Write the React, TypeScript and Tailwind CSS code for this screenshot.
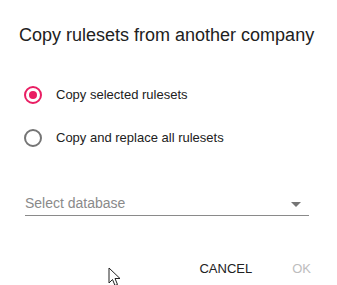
import React from "react";

function Radio({ checked }: { checked: boolean }) {
    return (
        <span
            className={`w-[18px] h-[18px] rounded-full border-2 flex items-center justify-center flex-shrink-0 ${
                checked ? "border-[#e91e63]" : "border-[#757575]"
            }`}
        >
            {checked && <span className="w-[8px] h-[8px] rounded-full bg-[#e91e63]" />}
        </span>
    );
}

export default function App() {
    return (
        <div
            className="relative w-[337px] h-[285px] bg-white overflow-hidden text-[#212121]"
            style={{ fontFamily: '"Liberation Sans", Arial, sans-serif' }}
        >
            <h2 className="pl-[19px] pt-[24px] text-[18px] leading-[22px]">
                Copy rulesets from another company
            </h2>

            <div className="mt-[40px] flex flex-col gap-[25px] pl-[24px]">
                <label className="flex items-center gap-[14px] h-[18px]">
                    <Radio checked />
                    <span className="text-[13px]">Copy selected rulesets</span>
                </label>
                <label className="flex items-center gap-[14px] h-[18px]">
                    <Radio checked={false} />
                    <span className="text-[13px]">Copy and replace all rulesets</span>
                </label>
            </div>

            <div className="mx-[25px] mt-[45px] w-[284px] h-[24px] flex items-center justify-between border-b border-[#8a8a8a]">
                <span className="text-[14px] text-[#8a8a8a] leading-[20px] -mt-[1px]">Select database</span>
                <svg width="10" height="5" viewBox="0 0 10 5" className="mr-[8px] mt-[2px]">
                    <path d="M0 0h10L5 5z" fill="#757575" />
                </svg>
            </div>

            <div className="absolute right-[26px] top-[259px] flex items-center gap-[40px] text-[13px]">
                <button type="button" className="text-[#212121]">CANCEL</button>
                <button type="button" className="text-[#bdbdbd]">OK</button>
            </div>

            <svg
                className="absolute left-[108px] top-[267px]"
                width="14"
                height="20"
                viewBox="0 0 14 20"
            >
                <path
                    d="M1 1v15l3.5-3.5 2.5 6 2.5-1-2.5-6H12z"
                    fill="white"
                    stroke="#222"
                    strokeWidth="1"
                    strokeLinejoin="round"
                />
            </svg>
        </div>
    );
}
